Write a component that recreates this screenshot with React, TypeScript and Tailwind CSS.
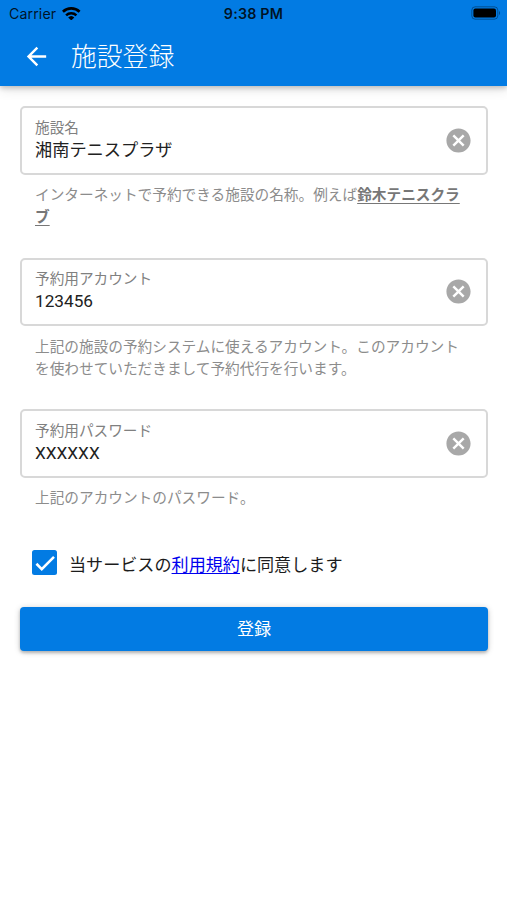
import React from "react";
import type { ReactNode } from "react";
import { MdArrowBack, MdCancel } from "react-icons/md";

function StatusBar() {
  return (
    <div className="grid h-[28px] grid-cols-3 items-center pl-[9px] pr-[6px] font-['Inter',sans-serif] text-black/85">
      <div className="flex items-center gap-[6px]">
        <span className="text-[14.2px] leading-[28px] tracking-[0.1px]">
          Carrier
        </span>
        <svg
          viewBox="0 0 18 13"
          className="-mt-px h-[13.5px] w-[18.5px]"
          fill="none"
        >
          <path
            d="M.9 4.6a11.6 11.6 0 0 1 16.2 0"
            stroke="black"
            strokeWidth="2.6"
          />
          <path
            d="M4 8a7.1 7.1 0 0 1 10 0"
            stroke="black"
            strokeWidth="2.4"
          />
          <path d="M9 13 6 10.1a4.3 4.3 0 0 1 6 0z" fill="black" />
        </svg>
      </div>
      <span className="pr-[3px] text-center text-[14.3px] font-semibold leading-[28px] tracking-[0.2px]">
        9:38 PM
      </span>
      <svg
        viewBox="0 0 30 14"
        className="-mt-[2px] h-[14px] w-[30px] justify-self-end"
        fill="none"
      >
        <rect
          x="0.8"
          y="0.8"
          width="26"
          height="12.4"
          rx="3.4"
          stroke="black"
          strokeOpacity="0.35"
        />
        <rect x="2.4" y="2.4" width="22.6" height="9.2" rx="2" fill="black" />
        <path d="M28 5v4c1.4-.6 1.4-3.4 0-4z" fill="black" fillOpacity="0.4" />
      </svg>
    </div>
  );
}

interface FieldProps {
  label: string;
  value: string;
  children: ReactNode;
}

function Field({ label, value, children }: FieldProps) {
  return (
    <div className="h-[151.5px]">
      <div className="flex h-[68.5px] items-center justify-between rounded-[5px] border-2 border-[#d8d8d8] px-[13px]">
        <div className="pb-px">
          <div className="text-[14.65px] leading-[20px] text-[#808080]">
            {label}
          </div>
          <div className="text-[17.2px] leading-[24px] text-[#212121]">
            {value}
          </div>
        </div>
        <MdCancel className="size-[29px] text-[#a8a8a8]" />
      </div>
      <p className="px-[15px] pt-[9.5px] text-[14.67px] leading-[22px] text-[#8c8c8c]">
        {children}
      </p>
    </div>
  );
}

export default function App() {
  return (
    <div className="h-[900px] w-full overflow-hidden bg-white font-['Roboto','Noto_Sans_CJK_JP',sans-serif]">
      <header className="h-[86px] bg-[#027be3] shadow-[0_2px_5px_rgba(0,0,0,0.2),0_3px_12px_rgba(0,0,0,0.12)]">
        <StatusBar />
        <div className="flex h-[56px] items-center gap-[20.5px] pl-[21.5px] text-white">
          <MdArrowBack className="size-[29px]" />
          <h1 className="pt-[2px] text-[25.8px] font-light leading-[36px]">
            施設登録
          </h1>
        </div>
      </header>

      <main className="pl-[20px] pr-[19px] pt-[20px]">
        <Field label="施設名" value="湘南テニスプラザ">
          インターネットで予約できる施設の名称。例えば
          <b className="text-[#777777] underline underline-offset-3">
            鈴木テニスクラブ
          </b>
        </Field>
        <Field label="予約用アカウント" value="123456">
          上記の施設の予約システムに使えるアカウント。このアカウントを使わせていただきまして予約代行を行います。
        </Field>
        <Field label="予約用パスワード" value="XXXXXX">
          上記のアカウントのパスワード。
        </Field>

        {/* Agreement */}
        <div className="-mt-[10.5px] flex h-[25px] items-center gap-[12px] pl-[12px]">
          <div className="flex size-[25px] items-center justify-center rounded-[2.5px] bg-[#027be3]">
            <svg viewBox="0 0 24 24" className="size-[20px]" fill="none">
              <path
                d="M1.73 12.91 8.1 19.28 22.79 4.59"
                stroke="white"
                strokeWidth="3.1"
              />
            </svg>
          </div>
          <span className="pt-[4px] text-[17.1px] leading-[24px] text-[#1c1c1c]">
            当サービスの
            <a href="#" className="text-[#0000ee] underline underline-offset-2">
              利用規約
            </a>
            に同意します
          </span>
        </div>

        <button className="mt-[32px] flex h-[44px] w-full items-center justify-center rounded-[4px] bg-[#027be3] pt-[2px] text-[17.1px] text-white shadow-[0_1px_6px_rgba(0,0,0,0.2),0_2px_3px_rgba(0,0,0,0.2)]">
          登録
        </button>
      </main>
    </div>
  );
}
